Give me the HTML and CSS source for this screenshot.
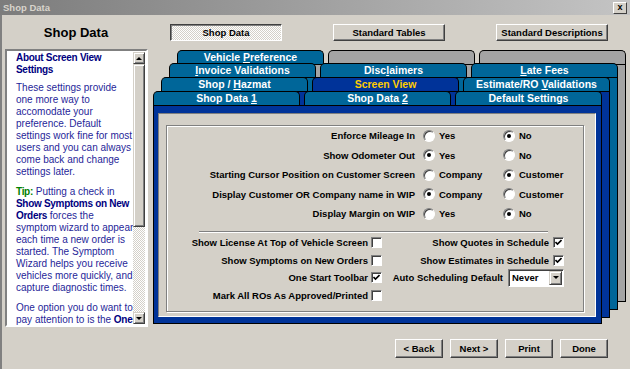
FILE: index.html
```html
<!DOCTYPE html>
<html lang="en">
<head>
    <meta charset="UTF-8">
    <meta name="viewport" content="width=device-width, initial-scale=1.0">
    <title>Shop Data</title>
    <link rel="stylesheet" href="styles.css">
</head>
<body>
    <div class="titlebar">
        <span class="title">Shop Data</span>
        <span class="close">x</span>
    </div>

    <div class="window">
        <div class="topbar">
            <div class="heading">Shop Data</div>
            <div class="top-buttons">
                <button class="btn btn-down">Shop Data</button>
                <button class="btn">Standard Tables</button>
                <button class="btn">Standard Descriptions</button>
            </div>
        </div>

        <div class="main">
            <!-- help text on the left -->
            <div class="help">
                <div class="help-text">
                    <p class="help-title">About Screen View<br>Settings</p>
                    <p>These settings provide<br>one more way to<br>accomodate your<br>preference. Default<br>settings work fine for most<br>users and you can always<br>come back and change<br>settings later.</p>
                    <p><b class="tip">Tip:</b> Putting a check in<br><b>Show Symptoms on New<br>Orders</b> forces the<br>symptom wizard to appear<br>each time a new order is<br>started. The Symptom<br>Wizard helps you receive<br>vehicles more quickly, and<br>capture diagnostic times.</p>
                    <p>One option you do want to<br>pay attention to is the <b>One</b></p>
                </div>
                <div class="scrollbar">
                    <div class="sb-btn"><span class="arrow-up"></span></div>
                    <div class="sb-thumb"></div>
                    <div class="sb-track"></div>
                    <div class="sb-btn"><span class="arrow-down"></span></div>
                </div>
            </div>

            <!-- stacked tab pages -->
            <div class="tabs">
                <div class="layer layer-1">
                    <div class="tab-row">
                        <div class="tab">Vehicle <u>P</u>reference</div>
                        <div class="tab tab-blank"></div>
                        <div class="tab tab-blank"></div>
                    </div>
                    <div class="page"></div>
                </div>
                <div class="layer layer-2">
                    <div class="tab-row">
                        <div class="tab"><u>I</u>nvoice Validations</div>
                        <div class="tab">Disc<u>l</u>aimers</div>
                        <div class="tab"><u>L</u>ate Fees</div>
                    </div>
                    <div class="page"></div>
                </div>
                <div class="layer layer-3">
                    <div class="tab-row">
                        <div class="tab">Shop / <u>H</u>azmat</div>
                        <div class="tab tab-active">Screen View</div>
                        <div class="tab">Estimate/RO <u>V</u>alidations</div>
                    </div>
                    <div class="page"></div>
                </div>
                <div class="layer layer-4">
                    <div class="tab-row">
                        <div class="tab">Shop Data <u>1</u></div>
                        <div class="tab">Shop Data <u>2</u></div>
                        <div class="tab">Default Settings</div>
                    </div>
                    <div class="page page-front">
                        <div class="panel">
                            <div class="group">
                                <div class="radio-grid">
                                    <span class="label">Enforce Mileage In</span>
                                    <span class="option"><span class="radio"></span>Yes</span>
                                    <span class="option"><span class="radio on"></span>No</span>

                                    <span class="label">Show Odometer Out</span>
                                    <span class="option"><span class="radio on"></span>Yes</span>
                                    <span class="option"><span class="radio"></span>No</span>

                                    <span class="label">Starting Cursor Position on Customer Screen</span>
                                    <span class="option"><span class="radio"></span>Company</span>
                                    <span class="option"><span class="radio on"></span>Customer</span>

                                    <span class="label">Display Customer OR Company name in WIP</span>
                                    <span class="option"><span class="radio on"></span>Company</span>
                                    <span class="option"><span class="radio"></span>Customer</span>

                                    <span class="label">Display Margin on WIP</span>
                                    <span class="option"><span class="radio"></span>Yes</span>
                                    <span class="option"><span class="radio on"></span>No</span>
                                </div>

                                <div class="separator"></div>

                                <div class="check-grid">
                                    <span class="cell">Show License At Top of Vehicle Screen <span class="check"></span></span>
                                    <span class="cell cell-right">Show Quotes in Schedule <span class="check on"><svg viewBox="0 0 7 7" width="7" height="7"><polyline points="0.5,3 2.5,5 6.5,1"/></svg></span></span>

                                    <span class="cell">Show Symptoms on New Orders <span class="check"></span></span>
                                    <span class="cell cell-right">Show Estimates in Schedule <span class="check on"><svg viewBox="0 0 7 7" width="7" height="7"><polyline points="0.5,3 2.5,5 6.5,1"/></svg></span></span>

                                    <span class="cell">One Start Toolbar <span class="check on"><svg viewBox="0 0 7 7" width="7" height="7"><polyline points="0.5,3 2.5,5 6.5,1"/></svg></span></span>
                                    <span class="cell cell-right">Auto Scheduling Default
                                        <span class="select"><span class="select-value">Never</span><span class="select-btn"><span class="arrow-down"></span></span></span>
                                    </span>

                                    <span class="cell">Mark All ROs As Approved/Printed <span class="check"></span></span>
                                    <span class="cell cell-right"></span>
                                </div>
                            </div>
                        </div>
                    </div>
                </div>
            </div>
        </div>

        <div class="footer">
            <button class="btn btn-small">&lt; Back</button>
            <button class="btn btn-small">Next &gt;</button>
            <button class="btn btn-small">Print</button>
            <button class="btn btn-small">Done</button>
        </div>
    </div>
</body>
</html>
```

FILE: styles.css
```css
* {
    box-sizing: border-box;
}

body {
    margin: 0;
    width: 630px;
    height: 369px;
    overflow: hidden;
    background: #d4d0c8;
    font-family: "Liberation Sans", Arial, sans-serif;
}

.titlebar {
    height: 15px;
    background: linear-gradient(to right, #7c7c7c, #c4c4c4);
    display: flex;
    align-items: center;
    justify-content: space-between;
    padding: 0 3px 0 3px;
    color: #d8d4cc;
    font: bold 9.5px/15px "Liberation Sans", Arial, sans-serif;
}

.close {
    width: 14px;
    height: 12px;
    background: #d4d0c8;
    border: 1px solid;
    border-color: #fff #404040 #404040 #fff;
    color: #000;
    font-size: 9px;
    line-height: 9px;
    text-align: center;
}

.window {
    height: 354px;
    border-left: 2px solid #808080;
}

/* top header row */
.topbar {
    display: flex;
    align-items: center;
    height: 32px;
    padding-top: 2px;
}

.heading {
    width: 148px;
    text-align: center;
    font-size: 13px;
    font-weight: bold;
    color: #000;
}

.top-buttons {
    display: flex;
    gap: 51px;
    margin-left: 20px;
}

.btn {
    height: 17px;
    width: 112px;
    padding: 0;
    background: #d4d0c8;
    border: 1px solid;
    border-color: #fff #404040 #404040 #fff;
    box-shadow: inset -1px -1px #808080;
    font: bold 9.5px "Liberation Sans", Arial, sans-serif;
    color: #000;
}

.btn-down {
    border-color: #404040 #fff #fff #404040;
    box-shadow: inset 1px 1px #808080;
    background: repeating-conic-gradient(#fff 0 25%, #d4d0c8 0 50%) 0 0 / 2px 2px;
}

.main {
    display: flex;
    height: 280px;
}

/* help panel */
.help {
    width: 143px;
    height: 278px;
    margin: 2px 0 0 3px;
    display: flex;
    background: #fff;
    border: 2px solid;
    border-color: #808080 #fff #fff #808080;
    overflow: hidden;
}

.help-text {
    flex: 1;
    padding: 1px 0 0 9px;
    font-size: 10px;
    line-height: 12px;
    color: #1f1f99;
    white-space: nowrap;
    overflow: hidden;
}

.help-text p {
    margin: 0 0 8px;
}

.help-text .help-title {
    margin-bottom: 6px;
}

.help-title,
.help-text b {
    font-weight: bold;
    color: #000080;
    letter-spacing: -0.3px;
}

.help-text .tip {
    color: #008000;
}

.scrollbar {
    width: 12px;
    display: flex;
    flex-direction: column;
    margin: 1px 1px 1px 0;
}

.sb-btn,
.sb-thumb {
    background: #d4d0c8;
    border: 1px solid;
    border-color: #d4d0c8 #404040 #404040 #d4d0c8;
    box-shadow: inset 1px 1px #fff, inset -1px -1px #808080;
}

.sb-btn {
    height: 12px;
    display: flex;
    align-items: center;
    justify-content: center;
}

.sb-thumb {
    height: 163px;
}

.sb-track {
    flex: 1;
    background: repeating-conic-gradient(#fff 0 25%, #d4d0c8 0 50%) 0 0 / 2px 2px;
}

.arrow-up,
.arrow-down {
    width: 0;
    height: 0;
    border-left: 3px solid transparent;
    border-right: 3px solid transparent;
}

.arrow-up {
    border-bottom: 3px solid #000;
}

.arrow-down {
    border-top: 3px solid #000;
}

/* stacked tab pages */
.tabs {
    position: relative;
    width: 475px;
    height: 275px;
    margin: 3px 0 0 5px;
}

.layer {
    position: absolute;
    width: 449px;
    display: flex;
    flex-direction: column;
}

.layer-1 { left: 24px; top: 0; height: 252px; }
.layer-2 { left: 16px; top: 13px; height: 247px; }
.layer-3 { left: 8px; top: 27px; height: 241px; }
.layer-4 { left: 0; top: 41px; height: 233px; }

.tab-row {
    display: flex;
    gap: 4px;
    height: 14px;
    flex-shrink: 0;
}

.tab {
    flex: 1;
    background: #006699;
    border: 1px solid #000;
    border-bottom: 0;
    border-radius: 5px 5px 0 0;
    color: #fff;
    font: bold 10.5px/13px "Liberation Sans", Arial, sans-serif;
    text-align: center;
    white-space: nowrap;
    overflow: hidden;
}

.tab-blank {
    background: #a4a4a4;
}

.tab-active {
    background: #003399;
    color: #ffcc00;
}

.page {
    flex: 1;
    border: 1px solid #000;
}

.layer-1 .page { background: #a4a4a4; }
.layer-2 .page { background: #006699; }
.layer-3 .page { background: #003399; }

.page-front {
    background: #003399;
    padding: 7px 5px 6px 4px;
    display: flex;
}

.panel {
    flex: 1;
    display: flex;
    background: #d4d0c8;
    border: 1px solid;
    border-color: #808080 #fff #fff #808080;
    padding: 11px 11px 4px 7px;
}

.group {
    flex: 1;
    border: 1px solid #808080;
    box-shadow: inset 1px 1px #fff, 1px 1px #fff;
    font: bold 9.5px "Liberation Sans", Arial, sans-serif;
    color: #000;
}

.radio-grid {
    display: grid;
    grid-template-columns: 248px 72px auto;
    grid-auto-rows: 19.5px;
    column-gap: 8px;
    align-items: center;
}

.label {
    text-align: right;
    white-space: nowrap;
}

.option {
    display: flex;
    align-items: center;
    gap: 4px;
}

.radio {
    position: relative;
    width: 12px;
    height: 12px;
    border-radius: 50%;
    background: #fff;
    border: 1px solid;
    border-color: #808080 #fff #fff #808080;
    box-shadow: inset 1px 1px #404040;
}

.radio.on::after {
    content: '';
    position: absolute;
    left: 3px;
    top: 3px;
    width: 4px;
    height: 4px;
    border-radius: 50%;
    background: #000;
}

.separator {
    width: 349px;
    height: 2px;
    margin: 7.5px 0 1px 32px;
    border-top: 1px solid #808080;
    border-bottom: 1px solid #fff;
}

.check-grid {
    display: grid;
    grid-template-columns: 215px 182px;
    grid-auto-rows: 17.5px;
}

.cell {
    display: flex;
    align-items: center;
    justify-content: flex-end;
    gap: 3px;
    white-space: nowrap;
}

.cell-right {
    gap: 4px;
}

.check {
    width: 11px;
    height: 11px;
    background: #fff;
    border: 1px solid;
    border-color: #808080 #fff #fff #808080;
    box-shadow: inset 1px 1px #404040;
    display: flex;
    align-items: center;
    justify-content: center;
}

.check svg polyline {
    fill: none;
    stroke: #000;
    stroke-width: 1.6;
}

.select {
    width: 56px;
    height: 18px;
    margin-left: 1px;
    display: flex;
    background: #fff;
    border: 1px solid;
    border-color: #808080 #fff #fff #808080;
    box-shadow: inset 1px 1px #404040;
    padding: 1px;
}

.select-value {
    flex: 1;
    padding-left: 2px;
    line-height: 14px;
}

.select-btn {
    width: 13px;
    display: flex;
    align-items: center;
    justify-content: center;
    background: #d4d0c8;
    border: 1px solid;
    border-color: #d4d0c8 #404040 #404040 #d4d0c8;
    box-shadow: inset 1px 1px #fff, inset -1px -1px #808080;
}

/* bottom buttons */
.footer {
    display: flex;
    justify-content: flex-end;
    gap: 7px;
    padding: 12px 22px 0 0;
}

.btn-small {
    width: 48px;
    height: 19px;
}
```
